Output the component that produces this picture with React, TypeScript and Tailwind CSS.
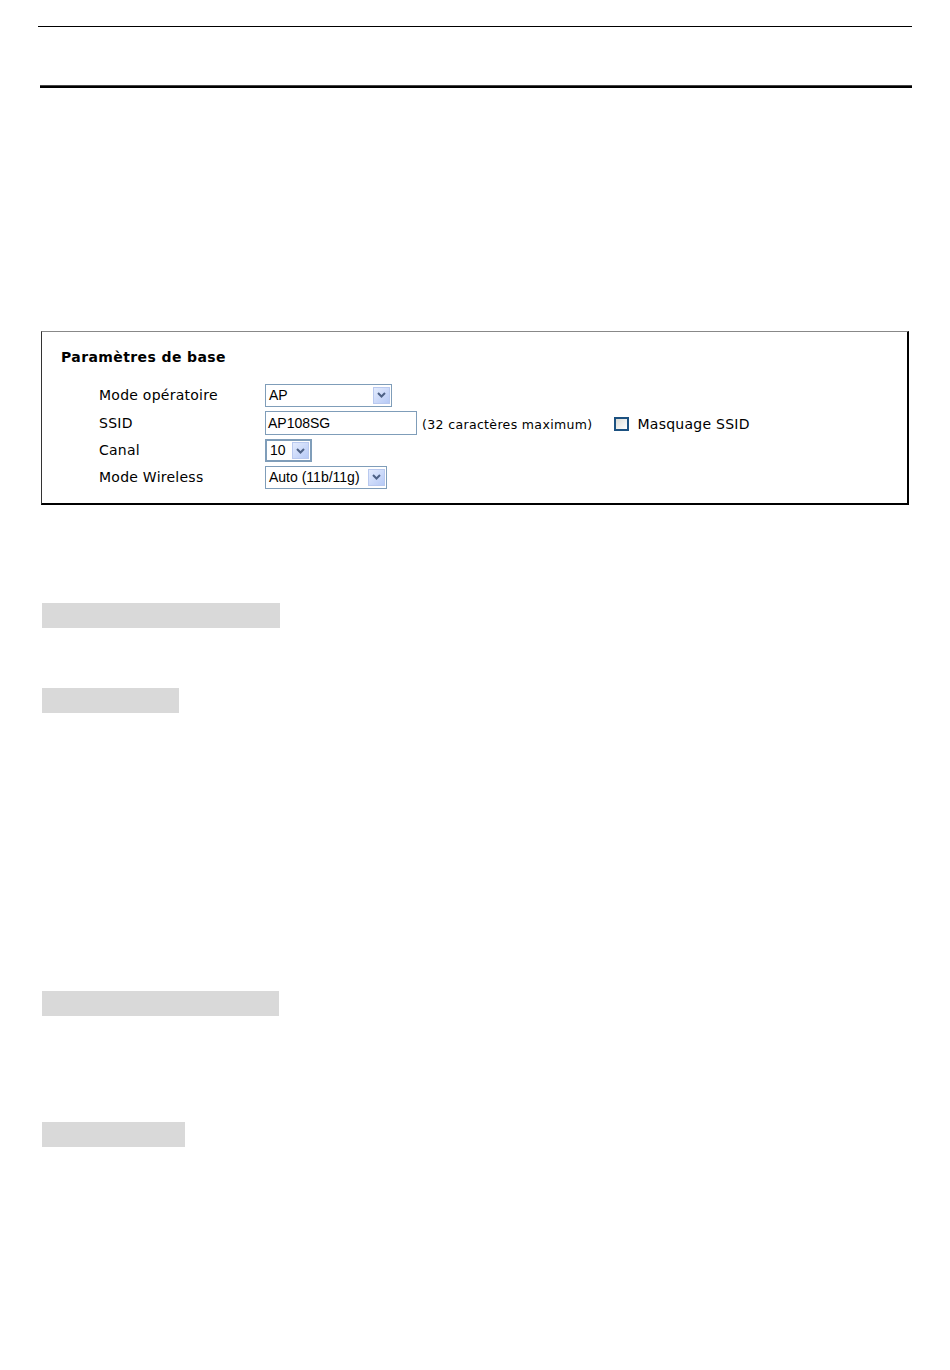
const font = "font-['DejaVu_Sans',Verdana,sans-serif]";

const Arrow = () => (
  <span className="flex h-[17px] w-[17px] items-center justify-center border border-[#b9c9ef] bg-[linear-gradient(135deg,#e3ebfd,#b7caf6)]">
    <svg width="9" height="6" viewBox="0 0 9 6">
      <path d="M1 1 L4.5 4.5 L8 1" stroke="#4d6185" strokeWidth="2" fill="none" />
    </svg>
  </span>
);

const Select = ({ value, width, thick }: { value: string; width: string; thick?: boolean }) => (
  <div
    className={`flex h-[23px] items-center justify-between bg-white pl-[3px] pr-[1px] text-[13px] text-black ${width} ${
      thick ? "border-2 border-[#7f9db9]" : "border border-[#7f9db9]"
    }`}
  >
    <span className="font-['Liberation_Sans',Arial,sans-serif] text-[14px]">{value}</span>
    <Arrow />
  </div>
);

const Row = ({ label, children, h }: { label: string; children: React.ReactNode; h: string }) => (
  <div className={`flex items-center ${h}`}>
    <span className="w-[166px] text-[14px] tracking-[0.25px]">{label}</span>
    {children}
  </div>
);

const Bar = ({ width, top }: { width: string; top: string }) => (
  <div className={`h-[25px] bg-[#d9d9d9] ${width} ${top}`} />
);

export default function App() {
  return (
    <div className={`min-h-[1370px] w-[950px] bg-white pt-[26px] ${font}`}>
      <div className="ml-[38px] h-px w-[874px] bg-black" />
      <div className="ml-[40px] mt-[58px] h-[3px] w-[872px] bg-[linear-gradient(#777,#000_40%,#000)]" />

      <div className="ml-[41px] mt-[243px] h-[174px] w-[868px] border-b-2 border-l border-r-2 border-t border-b-black border-l-[#333] border-r-black border-t-[#888] pl-[19px] pt-[15px]">
        <div className="text-[14px] font-bold leading-[20px] tracking-[0.4px]">Paramètres de base</div>
        <div className="ml-[38px] mt-[14px] flex flex-col">
          <Row label="Mode opératoire" h="h-[28px]">
            <Select value="AP" width="w-[127px]" />
          </Row>
          <Row label="SSID" h="h-[28px]">
            <div className="flex h-[24px] w-[152px] items-center border border-[#7f9db9] pl-[2px] font-['Liberation_Sans',Arial,sans-serif] text-[14px]">
              AP108SG
            </div>
            <span className="ml-[5px] mt-[4px] text-[12.5px] tracking-[0.35px]">(32 caractères maximum)</span>
            <span className="ml-[21px] mt-[2px] h-[14px] w-[15px] border-2 border-[#1c5180] bg-[linear-gradient(135deg,#dcdcd6,#fff)]" />
            <span className="ml-[9px] mt-[3px] text-[14px] tracking-[0.25px]">Masquage SSID</span>
          </Row>
          <Row label="Canal" h="h-[27px]">
            <Select value="10" width="w-[47px]" thick />
          </Row>
          <Row label="Mode Wireless" h="h-[26px]">
            <Select value="Auto (11b/11g)" width="w-[122px]" />
          </Row>
        </div>
      </div>

      <div className="ml-[42px] flex flex-col">
        <Bar width="w-[238px]" top="mt-[98px]" />
        <Bar width="w-[137px]" top="mt-[60px]" />
        <Bar width="w-[237px]" top="mt-[278px]" />
        <Bar width="w-[143px]" top="mt-[106px]" />
      </div>
    </div>
  );
}
